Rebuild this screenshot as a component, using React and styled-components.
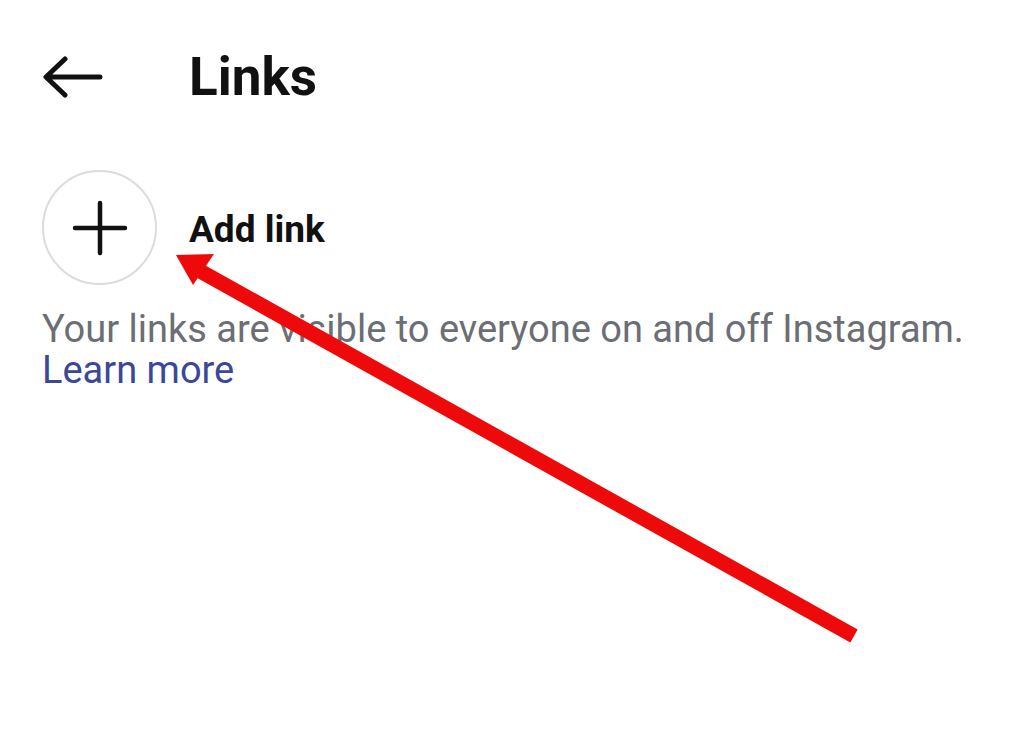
import React from "react";
import styled, { createGlobalStyle } from "styled-components";

const GlobalStyle = createGlobalStyle`
  html, body {
    margin: 0;
    padding: 0;
    background: #ffffff;
  }
  body {
    font-family: Roboto, "Liberation Sans", sans-serif;
    color: #111111;
  }
`;

// Whole screen
const Screen = styled.div`
  position: relative;
  width: 1024px;
  height: 737px;
  overflow: hidden;
  background: #ffffff;
`;

// Top bar with back arrow and title
const Header = styled.header`
  display: flex;
  align-items: center;
  height: 80px;
  padding: 37px 0 0 42px;
`;

const BackButton = styled.button`
  display: flex;
  align-items: center;
  justify-content: center;
  width: 62px;
  height: 46px;
  padding: 0;
  margin-right: 85px;
  background: none;
  border: none;
  cursor: pointer;
`;

const Title = styled.h1`
  margin: 0;
  font-size: 53px;
  font-weight: 700;
  color: #111111;
`;

// "Add link" row
const AddRow = styled.div`
  display: flex;
  align-items: center;
  gap: 32px;
  padding: 53px 0 0 42px;
`;

const AddCircle = styled.div`
  display: flex;
  align-items: center;
  justify-content: center;
  width: 111px;
  height: 111px;
  border: 2px solid #dcdcdc;
  border-radius: 50%;
`;

const AddLabel = styled.span`
  font-size: 37px;
  font-weight: 700;
  color: #111111;
  padding-top: 4px;
`;

// Info text
const Info = styled.p`
  margin: 24px 0 0 42px;
  font-size: 38px;
  line-height: 41px;
  color: #6b6e74;
`;

const LearnMore = styled.a`
  display: block;
  color: #3a4896;
  text-decoration: none;
`;

// Red annotation arrow drawn over the page
const Annotation = styled.svg`
  position: absolute;
  left: 0;
  top: 0;
  pointer-events: none;
`;

export default function App() {
  return (
    <>
      <GlobalStyle />
      <Screen>
        <Header>
          <BackButton aria-label="Back">
            <svg width="60" height="44" viewBox="0 0 60 44" fill="none">
              <path
                d="M57 22H4M22 4L3 22l19 18"
                stroke="#111"
                strokeWidth="5"
                strokeLinecap="round"
                strokeLinejoin="round"
              />
            </svg>
          </BackButton>
          <Title>Links</Title>
        </Header>

        <AddRow>
          <AddCircle>
            <svg width="56" height="56" viewBox="0 0 56 56" fill="none">
              <path
                d="M28 3v50M3 28h50"
                stroke="#111"
                strokeWidth="4.5"
                strokeLinecap="round"
              />
            </svg>
          </AddCircle>
          <AddLabel>Add link</AddLabel>
        </AddRow>

        <Info>
          Your links are visible to everyone on and off Instagram.
          <LearnMore href="#">Learn more</LearnMore>
        </Info>

        <Annotation width="1024" height="737" viewBox="0 0 1024 737">
          <line
            x1="854"
            y1="636"
            x2="200"
            y2="271"
            stroke="#ee0a0a"
            strokeWidth="15"
          />
          <polygon points="176,255 214,254 193,285" fill="#ee0a0a" />
        </Annotation>
      </Screen>
    </>
  );
}
